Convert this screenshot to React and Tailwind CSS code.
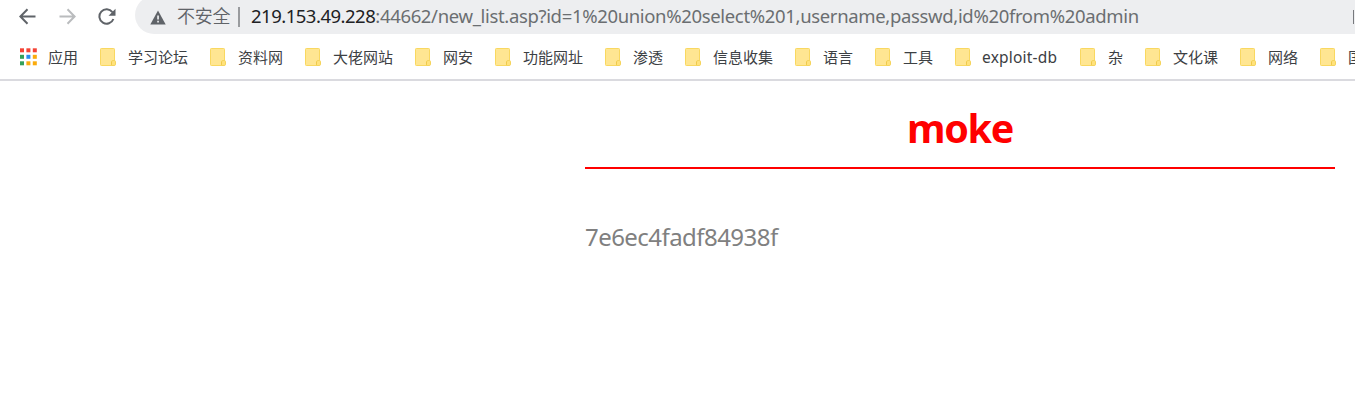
const folders = [
  ['学习论坛', 'w-[110px]'],
  ['资料网', 'w-[95px]'],
  ['大佬网站', 'w-[110px]'],
  ['网安', 'w-[80px]'],
  ['功能网址', 'w-[110px]'],
  ['渗透', 'w-[80px]'],
  ['信息收集', 'w-[110px]'],
  ['语言', 'w-[80px]'],
  ['工具', 'w-[80px]'],
  ['exploit-db', 'w-[125px]'],
  ['杂', 'w-[65px]'],
  ['文化课', 'w-[95px]'],
  ['网络', 'w-[80px]'],
  ['国外', 'w-[80px]'],
];

const appColors = ['#f44336', '#f44336', '#f44336', '#34a05a', '#2a8cf0', '#fbab0c', '#34a05a', '#fbab0c', '#fbab0c'];

function FolderIcon() {
  return (
    <svg className="h-[18px] w-4 shrink-0" viewBox="0 0 16 18">
      <rect x="0.5" y="0.5" width="14" height="17" rx="0.8" fill="#ffe692" stroke="#f9d860" />
      <path d="M11.5 17.5v-3.5a1.5 1.5 0 0 1 1.5-1.5h1.2a1.3 1.3 0 0 1 1.3 1.3v2.4a1.3 1.3 0 0 1-1.3 1.3z" fill="#ffe27c" stroke="#f5d45c" />
      <path d="M11.5 16.8v-3" stroke="#efc94b" />
    </svg>
  );
}

function AppsIcon() {
  return (
    <svg className="h-[18px] w-[17px] shrink-0" viewBox="0 0 17 18">
      {appColors.map((c, i) => (
        <rect key={i} x={(i % 3) * 6.4} y={0.3 + Math.floor(i / 3) * 6.5} width="4" height="4" fill={c} />
      ))}
    </svg>
  );
}

export default function App() {
  return (
    <div className="h-[400px] w-[1355px] overflow-hidden bg-white font-['Noto_Sans','Noto_Sans_CJK_SC',sans-serif]">
      <header className="h-[81px] border-b-2 border-[#dadadf]">
        <div className="flex h-[34px]">
          <div className="flex h-[33px] w-[135px] items-center gap-[23px] pl-[19px] text-[#5f6368]">
            <svg className="h-[17px] w-[17px]" viewBox="0 0 17 17" fill="none" stroke="currentColor" strokeWidth="2">
              <path d="M16.5 8.5H2M8.5 1.2L1.4 8.5l7.1 7.3" />
            </svg>
            <svg className="h-[17px] w-[17px] text-[#babcbe]" viewBox="0 0 17 17" fill="none" stroke="currentColor" strokeWidth="2">
              <path d="M0.5 8.5H15M8.5 1.2l7.1 7.3-7.1 7.3" />
            </svg>
            <svg className="-ml-px h-[18px] w-[18px]" viewBox="0 0 18 18">
              <path d="M14.4 4.2A7.2 7.2 0 1 0 15.4 11" fill="none" stroke="currentColor" strokeWidth="2" />
              <path d="M17.5 0.8v7h-7z" fill="currentColor" />
            </svg>
          </div>
          <div className="flex h-[34px] flex-1 overflow-hidden">
            <div className="-mt-[4px] flex h-[38px] flex-1 items-center rounded-l-full bg-[#edeef0] pt-[3px] pl-[15px]">
              <svg className="mt-px h-[15px] w-[16px]" viewBox="0 0 16 15">
                <path d="M8 0.5L15.7 14.5H0.3z" fill="#5f6368" />
                <path d="M7.2 5.4h1.7v4H7.2zM7.2 10.8h1.7v1.7H7.2z" fill="#edeef0" />
              </svg>
              <span className="-mt-[2px] ml-[11px] w-[61px] text-[18px] leading-[24px] font-[330] whitespace-nowrap text-[#5f6368]">
                <span className="tracking-[-0.2px]">不安全</span>
              </span>
              <span className="h-5 w-[2px] bg-[#999b9e]" />
              <span className="-mt-[2px] ml-[11px] w-[1100px] text-[18.5px] leading-[24px] font-[370] whitespace-nowrap text-[#6b6e71]">
                <span className="tracking-[-0.5px] text-[#202124]">219.153.49.228</span>
                <span className="tracking-[-0.34px]">:44662/new_list.asp?id=1%20union%20select%201,username,passwd,id%20from%20admin</span>
              </span>
              <span className="mr-px ml-auto h-[14px] w-px bg-[#77797d]" />
            </div>
          </div>
        </div>
        <nav className="flex h-[45px] items-center pl-5 text-[15px] leading-5 font-[370] whitespace-nowrap text-[#3c4043]">
          <div className="flex w-20 shrink-0 items-center">
            <AppsIcon />
            <span className="ml-[11px]">应用</span>
          </div>
          {folders.map(([name, width]) => (
            <div key={name} className={'flex shrink-0 items-center ' + width}>
              <FolderIcon />
              <span className={name === 'exploit-db' ? 'ml-[11px] text-[15.5px] tracking-[0.2px]' : 'ml-[12px]'}>{name}</span>
            </div>
          ))}
        </nav>
      </header>
      <main className="ml-[585px] w-[750px]">
        <h1 className="flex h-[88px] items-center justify-center border-b-2 border-[#ff0000] pt-[9px] text-[39.5px] font-bold tracking-[-1.3px] text-[#ff0000]">
          moke
        </h1>
        <p className="pt-[51px] text-[24px] leading-[34px] text-[#808080]">
          <span className="tracking-[-0.55px]">7e6ec4fadf84938f</span>
        </p>
      </main>
    </div>
  );
}
